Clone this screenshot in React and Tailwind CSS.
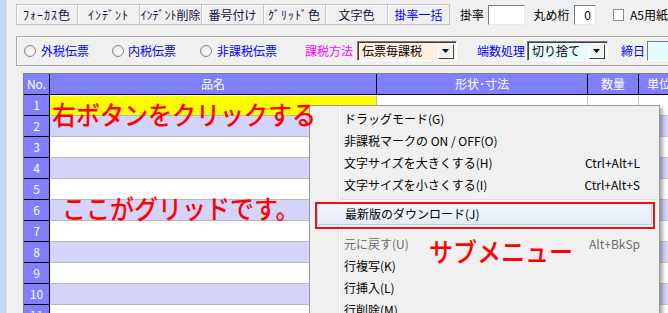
import React from "react";

const FONT = { fontFamily: '"Noto Sans CJK JP", "Noto Sans", sans-serif' };

function TbButton({ children, first, blue, wide }) {
  return (
    <div
      className={`h-[21px] w-[62px] shrink-0 flex items-center justify-center border-t border-b border-r border-[#c4c4c4] bg-[#f0f0f0] shadow-[inset_1px_1px_0_#ffffff] text-[12px] leading-none whitespace-nowrap ${wide ? "tracking-[1px]" : ""} ${first ? "border-l" : ""} ${blue ? "text-[#0000ff]" : "text-[#10103a]"}`}
    >
      {children}
    </div>
  );
}

function Radio() {
  return (
    <div className="w-[12px] h-[12px] shrink-0 rounded-full border border-[#8a8a8a] bg-[radial-gradient(circle_at_60%_60%,#ffffff,#dcdcdc)]" />
  );
}

function Combo({ text, bg, w }) {
  return (
    <div className={`h-[20px] ${w} shrink-0 flex items-center border border-t-[#7a7a7a] border-l-[#7a7a7a] border-b-white border-r-white shadow-[inset_1px_1px_0_#404040] ${bg}`}>
      <span className="flex-1 pl-[4px] text-[12px] leading-none text-black">{text}</span>
      <div className="w-[16px] h-[15px] mr-[2px] flex items-center justify-center bg-[#f0f0f0] border border-t-white border-l-white border-b-[#404040] border-r-[#404040]">
        <svg width="8" height="5" viewBox="0 0 8 5"><path d="M0 0h7L3.5 4z" fill="#000" /></svg>
      </div>
    </div>
  );
}

function Row({ n }) {
  const even = n % 2 === 0;
  return (
    <div className="flex h-[21px] shrink-0">
      <div className="w-[26px] shrink-0 bg-[#8080ff] border-r border-b border-black flex items-center justify-center text-white text-[12px] leading-none">
        {n}
      </div>
      <div className={`w-[327px] shrink-0 border-r border-b border-[#b8b8b8] ${even ? "bg-[#d4d4fb]" : "bg-white"}`}>
        {n === 1 ? <div className="mt-px h-[19px] bg-[#ffff00]" /> : null}
      </div>
      <div className={`w-[211px] shrink-0 border-r border-b border-[#c4c4c4] ${even ? "bg-[#d4d4fb]" : "bg-white"}`} />
      <div className={`w-[51px] shrink-0 border-r border-b border-[#c4c4c4] ${even ? "bg-[#d4d4fb]" : "bg-white"}`} />
      <div className={`w-[60px] shrink-0 border-b border-[#c4c4c4] ${even ? "bg-[#d4d4fb]" : "bg-white"}`} />
    </div>
  );
}

function MenuItem({ label, shortcut, disabled }) {
  return (
    <div className={`h-[22px] flex items-center pl-[34px] pr-[19px] text-[12px] leading-none ${disabled ? "text-[#6d6d6d]" : "text-black"}`}>
      <span className="flex-1 whitespace-pre">{label}</span>
      {shortcut ? <span>{shortcut}</span> : null}
    </div>
  );
}

function Sep({ h }) {
  return (
    <div className={`${h} flex items-center pl-[31px] pr-[2px]`}>
      <div className="flex-1 h-[2px] border-t border-[#e0e0e0] border-b border-b-white" />
    </div>
  );
}

export default function App() {
  const rows = [1, 2, 3, 4, 5, 6, 7, 8, 9, 10, 11, 12];
  return (
    <div className="relative w-[668px] h-[313px] overflow-hidden bg-[#f0f0f0] flex" style={FONT}>
      <div className="w-[7px] shrink-0 bg-[#c2d8ee] border-r border-[#dcdcdc]" />
      <div className="flex-1 min-w-0 flex flex-col">
        {/* toolbar */}
        <div className="flex items-center h-[21px] mt-[4px] ml-[9px] whitespace-nowrap">
          <TbButton first wide>ﾌｫｰｶｽ色</TbButton>
          <TbButton wide>ｲﾝﾃﾞﾝﾄ</TbButton>
          <TbButton>ｲﾝﾃﾞﾝﾄ削除</TbButton>
          <TbButton>番号付け</TbButton>
          <TbButton wide>ｸﾞﾘｯﾄﾞ色</TbButton>
          <TbButton>文字色</TbButton>
          <TbButton blue>掛率一括</TbButton>
          <span className="ml-[10px] w-[24px] text-[12px] leading-none text-black">掛率</span>
          <div className="ml-[4px] w-[40px] h-[20px] mt-[1px] bg-white border border-t-[#7a7a7a] border-l-[#7a7a7a] border-b-[#e8e8e8] border-r-[#e8e8e8]" />
          <span className="ml-[9px] w-[36px] text-[12px] leading-none text-black">丸め桁</span>
          <div className="ml-[4px] w-[24px] h-[20px] mt-[1px] bg-white border border-t-[#7a7a7a] border-l-[#7a7a7a] border-b-[#e8e8e8] border-r-[#e8e8e8] flex items-center justify-end pr-[4px] text-[12px] leading-none">0</div>
          <div className="ml-[17px] w-[12px] h-[12px] bg-white border border-[#8a8a8a]" />
          <span className="ml-[6px] text-[12px] leading-none text-black">A5用紙</span>
        </div>
        {/* group box */}
        <div className="mt-[11px] ml-[9px] w-[700px] h-[30px] shrink-0 border border-[#a8a8a8] shadow-[inset_1px_1px_0_#ffffff] flex items-center whitespace-nowrap">
          <div className="ml-[7px]"><Radio /></div>
          <span className="ml-[5px] w-[48px] text-[12px] leading-none text-[#0000ff]">外税伝票</span>
          <div className="ml-[23px]"><Radio /></div>
          <span className="ml-[4px] w-[48px] text-[12px] leading-none text-[#0000ff]">内税伝票</span>
          <div className="ml-[24px]"><Radio /></div>
          <span className="ml-[5px] w-[60px] text-[12px] leading-none text-[#0000ff]">非課税伝票</span>
          <span className="ml-[28px] w-[48px] text-[12px] leading-none text-[#ff00ff]">課税方法</span>
          <div className="ml-[4px]"><Combo text="伝票毎課税" bg="bg-[#fff0e2]" w="w-[100px]" /></div>
          <span className="ml-[20px] w-[48px] text-[12px] leading-none text-[#0000ff]">端数処理</span>
          <div className="ml-[2px]"><Combo text="切り捨て" bg="bg-[#e6fbfb]" w="w-[81px]" /></div>
          <span className="ml-[13px] w-[24px] text-[12px] leading-none text-[#0000ff]">締日</span>
          <div className="ml-[2px] w-[40px] h-[20px] bg-[#e6fbfb] border border-t-[#7a7a7a] border-l-[#7a7a7a] border-b-white border-r-white" />
        </div>
        {/* grid */}
        <div className="mt-[7px] ml-[16px] w-[700px] flex flex-col border-t border-l border-[#808080] bg-white">
          <div className="flex h-[21px] shrink-0 bg-[#8080ff] border-b border-black text-white text-[12px] leading-none">
            <div className="w-[26px] shrink-0 border-r border-black flex items-center justify-center">No.</div>
            <div className="w-[327px] shrink-0 border-r border-black flex items-center justify-center">品名</div>
            <div className="w-[211px] shrink-0 border-r border-black flex items-center justify-center">形状･寸法</div>
            <div className="w-[51px] shrink-0 border-r border-black flex items-center justify-center">数量</div>
            <div className="w-[60px] shrink-0 flex items-center justify-start pl-[8px]">単位</div>
          </div>
          {rows.map((n) => (
            <Row key={n} n={n} />
          ))}
        </div>
      </div>

      {/* context menu */}
      <div className="absolute left-[309px] top-[105px] w-[351px] h-[240px] bg-[#f0f0f0] border border-[#979797] shadow-[3px_3px_3px_rgba(0,0,0,0.3)] pt-[2px] flex flex-col">
        <div className="absolute left-[28px] top-0 bottom-0 w-[2px] border-l border-[#e2e3e3] border-r border-r-white" />
        <MenuItem label="ドラッグモード(G)" />
        <MenuItem label="非課税マークの ON / OFF(O)" />
        <MenuItem label="文字サイズを大きくする(H)" shortcut="Ctrl+Alt+L" />
        <MenuItem label="文字サイズを小さくする(I)" shortcut="Ctrl+Alt+S" />
        <Sep h="h-[7px]" />
        <div className="relative h-[22px] mx-[7px] flex items-center pl-[27px] text-[12px] leading-none text-black rounded-[2px] border border-[#b9cfe8] bg-[linear-gradient(#f3f7fc,#e4ecf6)]">
          最新版のダウンロード(J)
        </div>
        <Sep h="h-[8px]" />
        <MenuItem label="元に戻す(U)" shortcut="Alt+BkSp" disabled />
        <MenuItem label="行複写(K)" />
        <MenuItem label="行挿入(L)" />
        <MenuItem label="行削除(M)" />
      </div>

      {/* annotations */}
      <div className="absolute left-[315px] top-[202px] w-[340px] h-[27px] border-2 border-[#ee1111]" />
      <div className="absolute left-[52px] top-[101px] origin-top-left scale-y-110 text-[24px] font-medium leading-none text-[#ff0000] whitespace-nowrap">右ボタンをクリックする</div>
      <div className="absolute left-[62px] top-[195px] origin-top-left scale-y-110 text-[24px] font-medium leading-none text-[#ff0000] whitespace-nowrap">ここがグリッドです。</div>
      <div className="absolute left-[429px] top-[238px] origin-top-left scale-y-110 text-[24px] font-medium leading-none text-[#ff0000] whitespace-nowrap">サブメニュー</div>
    </div>
  );
}
